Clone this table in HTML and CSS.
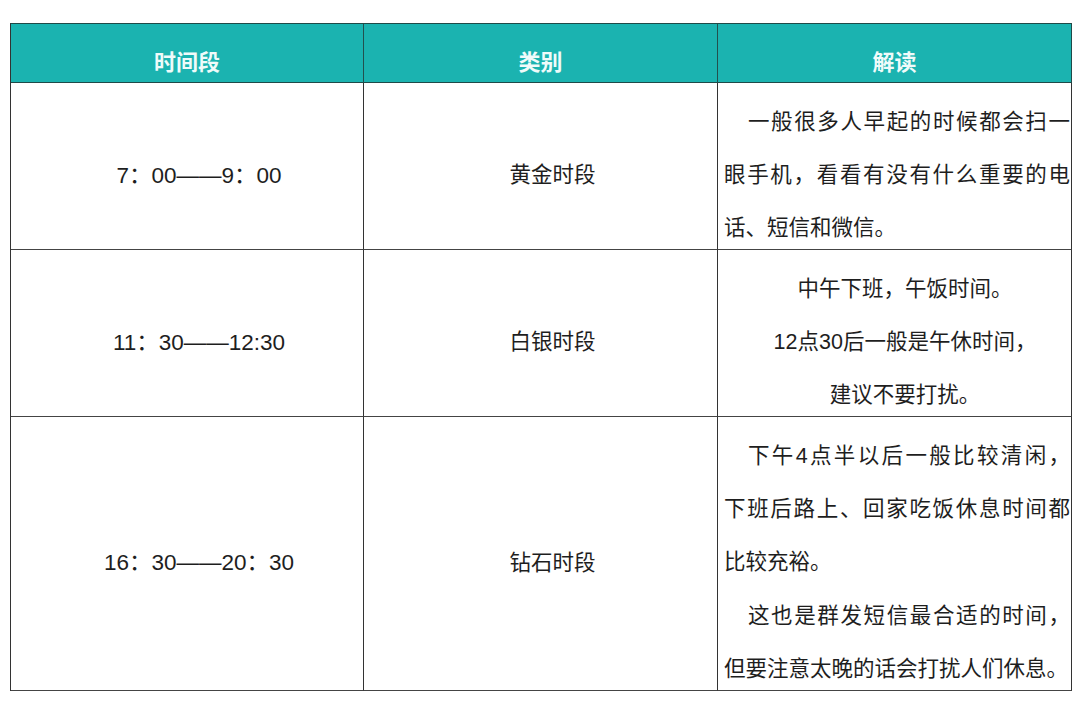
FILE: index.html
```html
<!DOCTYPE html>
<html lang="zh-CN">
<head>
<meta charset="utf-8">
<title>时间段</title>
<link rel="stylesheet" href="styles.css">
</head>
<body>
<div class="table">
  <div class="cell th">时间段</div>
  <div class="cell th">类别</div>
  <div class="cell th last">解读</div>

  <div class="cell td time">7：00——9：00</div>
  <div class="cell td kind">黄金时段</div>
  <div class="cell td last note">
    <div class="para">
      <span class="ln j ind">一般很多人早起的时候都会扫一</span>
      <span class="ln j">眼手机，看看有没有什么重要的电</span>
      <span class="ln">话、短信和微信。</span>
    </div>
  </div>

  <div class="cell td time">11：30——12:30</div>
  <div class="cell td kind">白银时段</div>
  <div class="cell td last note center">
    <div class="para">
      <span class="ln">中午下班，午饭时间。</span>
      <span class="ln">12点30后一般是午休时间，</span>
      <span class="ln">建议不要打扰。</span>
    </div>
  </div>

  <div class="cell td time">16：30——20：30</div>
  <div class="cell td kind">钻石时段</div>
  <div class="cell td last note">
    <div class="para">
      <span class="ln j ind">下午4点半以后一般比较清闲，</span>
      <span class="ln j">下班后路上、回家吃饭休息时间都</span>
      <span class="ln">比较充裕。</span>
      <span class="ln j ind">这也是群发短信最合适的时间，</span>
      <span class="ln">但要注意太晚的话会打扰人们休息。</span>
    </div>
  </div>
</div>
</body>
</html>
```
FILE: styles.css
```css
html, body {
  margin: 0;
  padding: 0;
  background: #ffffff;
}
body {
  font-family: "Liberation Sans", "Noto Sans CJK SC", sans-serif;
  color: #1e1e1e;
}
.table {
  display: grid;
  grid-template-columns: 353px 354px 354px;
  grid-template-rows: 59px 167px 167px 274px;
  width: 1062px;
  margin: 23px 0 0 10px;
  border-left: 1px solid #333333;
  border-top: 1px solid #1f4a48;
  box-sizing: border-box;
}
.cell {
  display: flex;
  align-items: center;
  justify-content: center;
  padding-top: 13px;
  box-sizing: border-box;
  border-right: 1px solid #333333;
  border-bottom: 1px solid #444444;
  min-height: 0;
  min-width: 0;
}
.th {
  background: #1bb3b0;
  color: #effbfa;
  font-family: "Noto Sans CJK SC", sans-serif;
  font-weight: 700;
  font-size: 22px;
  padding-top: 14px;
  border-right-color: #22504e;
  border-bottom-color: #1f4a48;
}
.th.last {
  border-right-color: #1f4a48;
}
.td {
  font-size: 21.5px;
  font-family: "Liberation Sans", "Noto Sans CJK SC", sans-serif;
}
.time {
  font-size: 22.5px;
  padding-left: 24px;
}
.kind {
  padding-left: 24px;
}
.note {
  justify-content: flex-start;
  padding-left: 6px;
  padding-right: 1px;
  padding-top: 19px;
}
.para {
  width: 100%;
  line-height: 53.2px;
}
.note .ln {
  display: block;
  white-space: nowrap;
  text-align: left;
}
.note .ln.j {
  text-align: justify;
  text-align-last: justify;
}
.note .ln.ind {
  text-indent: 24px;
}
.note.center .para {
  padding-left: 16px;
  box-sizing: border-box;
}
.note.center .ln {
  text-align: center;
}
```
